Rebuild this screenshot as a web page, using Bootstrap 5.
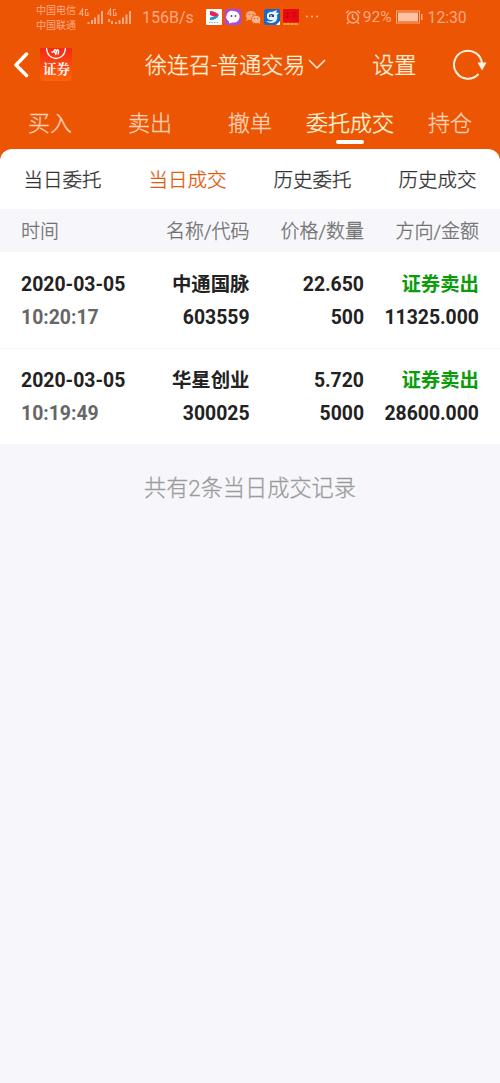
<!DOCTYPE html>
<html lang="zh-CN">
<head>
<meta charset="utf-8">
<meta name="viewport" content="width=device-width, initial-scale=1">
<title>委托成交</title>
<link href="https://cdn.jsdelivr.net/npm/bootstrap@5.3.0/dist/css/bootstrap.min.css" rel="stylesheet">
<style>
body{font-family:Roboto,"Noto Sans CJK SC",sans-serif;background:#f7f7fb;color:#222;min-height:1083px;overflow-x:hidden}
svg{display:block;flex:none}
.app-top{background:#eb5503;color:#fff0dc;height:163px}
.status-bar{height:34px;color:#ffa985;padding-left:36px;font-size:16px;white-space:nowrap}
.carriers{font-size:10px;line-height:15px;width:42px;padding-top:1px}
.title-bar{height:62px;font-size:22px}
.light-text{font-family:Roboto,"Noto Sans CJK SC Light","Noto Sans CJK SC",sans-serif;font-weight:350;-webkit-text-stroke:.3px currentColor}
.light-text svg{-webkit-text-stroke:0}
.main-tabs{height:53px;font-size:22px;color:#ffd0b4;line-height:32px;padding-top:12px}
.main-tabs>a{width:100px;color:inherit}
.main-tabs>a.active{color:#fff4d8}
.main-tabs>a.active::after{content:"";display:block;width:28px;height:4px;border-radius:2px;background:#fff;margin:0 auto}
.sheet{margin-top:-14px;border-radius:12px 12px 0 0}
.sub-tabs{height:60px;font-size:19.5px;padding:4px 23.5px 0 23.5px}
.sub-tabs>a{color:#333}
.sub-tabs>a.active{color:#e2590f}
.cols{display:grid;grid-template-columns:128.5px 100px 114.5px 115px;padding:0 21px}
.cols>*{text-align:right;white-space:nowrap}
.cols>:first-child{text-align:left}
.cols-head{height:43px;padding-top:4px;background:#f7f7fb;color:#707070;font-size:19px;align-items:center}
.deal{height:96px;padding-top:16px;font-size:19.4px;line-height:33px;font-weight:700}
.deal+.deal{border-top:1px solid #f7f7f9;padding-top:15px}
.clock{color:#666}
.sell{color:#0a9c0a}
.total{font-size:22.2px;color:#9b9b9b;margin-top:26px;line-height:36px}
</style>
</head>
<body>
<header class="app-top">
  <div class="status-bar d-flex align-items-center">
    <div class="carriers">中国电信<br>中国联通</div>
    <svg width="56" height="20" viewBox="0 0 56 20" fill="#ffa985"><g fill="none" stroke="#ffa985" stroke-width="1.1"><path d="M4.500 9V2L1.500 7h4M10 2.500H7.500V8.500H10V6H9M32.500 9V2l-3 5h4M38 2.500h-2.500V8.500H38V6H37"/></g><path d="M9.500 15h2v2h-2zM13 13h2v4h-2zM16 10.500h2V17h-2zM19.500 7.500h2V17h-2zM23 4h2v13h-2zM37 15h2v2h-2zM40.500 13h2v4h-2zM44 10.500h2V17h-2zM47.500 7.500h2V17h-2zM51 4h2v13h-2zM30 12h2v3h-2zM33 14h2v3h-2z"/></svg>
    <span style="margin-left:8px;padding-top:2px">156B/s</span>
    <svg style="margin-left:11px" width="114" height="18" viewBox="0 0 114 18">
      <rect x="1" y="1" width="16" height="16" rx="1" fill="#fff"/><path d="M5 3q5 0 9 4l-4 2-5-2z" fill="#ec2352"/><path d="M14 7q-2 5-9 5V9.500l5-1z" fill="#159bd0"/><path d="M4 14.500h10" stroke="#9bb1c4" stroke-dasharray="1.500 1"/>
      <rect x="20" y="1" width="16" height="16" rx="3" fill="#a44be9"/><path d="M28.500 3a6 5.800 0 1 1-1 11.500L24 15.500v-2A6 5.800 0 0 1 28.500 3z" fill="#fff"/><circle cx="26.500" cy="8" r=".9" fill="#543b86"/><circle cx="30.500" cy="8" r=".9" fill="#543b86"/>
      <ellipse cx="46" cy="7.500" rx="5.200" ry="4.600" fill="#ffab80"/><path d="M42 10l-1 3 4-2z" fill="#ffab80"/><ellipse cx="51" cy="11.500" rx="4.800" ry="4.200" fill="#ffb48d" stroke="#eb5503" stroke-width=".8"/><path d="M52 14l3 2v-4z" fill="#ffb48d"/><g fill="#d76022"><circle cx="44.500" cy="6.500" r=".8"/><circle cx="48" cy="6.500" r=".8"/><circle cx="49.500" cy="10.500" r=".7"/><circle cx="52.500" cy="10.500" r=".7"/></g>
      <rect x="59" y="1" width="16" height="16" rx="2" fill="#1969c9"/><path d="M62 6q3-3 5-2l5-2-1 2.500 3 .5-2 2q1 5-2 7-5 2.500-9-1l5 .5 3-1.500q-5 1-7-2z" fill="#e4f5ff"/><path d="M64 7q3-2 5 0v2h-5z" fill="#174b99"/><path d="M65 8h2" stroke="#fff"/><path d="M75 13v4h-4z" fill="#fff"/>
      <rect x="78" y="1" width="16" height="13.500" fill="#e80c12"/><path d="M80 5.500h5M82.500 3.500v7M80 9h5M87 5l5-1M87 8h5M89.500 4.500v6" stroke="#c60016" stroke-width=".8" fill="none"/><path d="M78.500 16h15" stroke="#ffc04a" stroke-width="1.300" stroke-dasharray="3 .6"/>
      <g fill="#ffb18c"><circle cx="102" cy="8.500" r="1.100"/><circle cx="107" cy="8.500" r="1.100"/><circle cx="112" cy="8.500" r="1.100"/></g>
    </svg>
    <svg style="margin-left:26px" width="16" height="16" viewBox="0 0 16 16" fill="none" stroke="#ffa985" stroke-width="1.500"><circle cx="8" cy="8.500" r="5.500"/><path d="M7.500 5v4l2.500 1.500M1 4l3-2.500M15 4l-3-2.500M3.500 13L2 15M12.500 13l1.500 2"/></svg>
    <span style="font-size:15.500px;margin-left:2px;padding-top:2px">92%</span>
    <svg style="margin-left:4px" width="29" height="14" viewBox="0 0 29 14"><rect x=".5" y="1" width="23" height="12" fill="none" stroke="#ffa985"/><rect x="2" y="2.500" width="20" height="9" fill="#ffc2a2"/><path d="M25 4h1.500v6H25z" fill="#ffa985"/></svg>
    <span style="margin-left:3px;padding-top:2px;font-size:15.700px">12:30</span>
  </div>
  <div class="title-bar light-text d-flex align-items-center">
    <svg style="margin-left:12px" width="18" height="26" viewBox="0 0 18 26" fill="none" stroke="#fff" stroke-width="3.500" stroke-linecap="round" stroke-linejoin="round"><path d="M14.500 2L4 13l10.500 10.500"/></svg>
    <svg style="margin-left:9px" width="35" height="34" viewBox="0 0 35 34"><defs><linearGradient id="brand" x2="0" y2="1"><stop stop-color="#f42918"/><stop offset="1" stop-color="#ff6308"/></linearGradient></defs><path d="M1 0h32v28q0 5-5 5H6q-5 0-5-5z" fill="url(#brand)"/><path d="M7.500 0C8 14 26 14 26.500 0" fill="none" stroke="#fff" stroke-width="1.300"/><path d="M12.500 3.500q1.500 1.500 2.500-.5l2 3.500M15 2q2-1 2.500 1.500L16.500 7M18 1.500q2.500 1 1 5" fill="none" stroke="#fff" stroke-width="1.400"/><text x="4" y="25.500" fill="#fff" font-family="Noto Serif CJK SC,Noto Sans CJK SC,sans-serif" font-size="13.500" font-weight="700">证券</text></svg>
    <span class="text-nowrap" style="margin-left:71px;padding-top:1px">徐连召-普通交易</span>
    <svg style="margin-left:3px" width="18" height="12" viewBox="0 0 18 12" fill="none" stroke="#fff0dc" stroke-width="1.500"><path d="M1 1l8 8 8-8"/></svg>
    <span style="margin-left:46px;padding-top:1px">设置</span>
    <svg style="margin-left:36px" width="36" height="34" viewBox="0 0 36 34"><path d="M26.500 26A14 14 0 1 1 30 16" fill="none" stroke="#fff0dc" stroke-width="2"/><path d="M25.500 14.500h9L30 22.500z" fill="#fff6e9"/></svg>
  </div>
  <nav class="main-tabs light-text d-flex text-center text-nowrap">
    <a class="text-decoration-none">买入</a><a class="text-decoration-none">卖出</a><a class="text-decoration-none">撤单</a><a class="active text-decoration-none">委托成交</a><a class="text-decoration-none">持仓</a>
  </nav>
</header>
<main class="sheet bg-white">
  <nav class="sub-tabs light-text d-flex justify-content-between align-items-center">
    <a class="text-decoration-none">当日委托</a><a class="active text-decoration-none">当日成交</a><a class="text-decoration-none">历史委托</a><a class="text-decoration-none">历史成交</a>
  </nav>
  <div class="cols cols-head light-text"><span>时间</span><span>名称/代码</span><span>价格/数量</span><span>方向/金额</span></div>
  <section class="deal cols">
    <div>2020-03-05<br><span class="clock">10:20:17</span></div><div>中通国脉<br>603559</div><div>22.650<br>500</div><div><span class="sell">证券卖出</span><br>11325.000</div>
  </section>
  <section class="deal cols">
    <div>2020-03-05<br><span class="clock">10:19:49</span></div><div>华星创业<br>300025</div><div>5.720<br>5000</div><div><span class="sell">证券卖出</span><br>28600.000</div>
  </section>
</main>
<p class="total light-text text-center mb-0">共有2条当日成交记录</p>
<script src="https://cdn.jsdelivr.net/npm/bootstrap@5.3.0/dist/js/bootstrap.bundle.min.js"></script>
</body>
</html>
